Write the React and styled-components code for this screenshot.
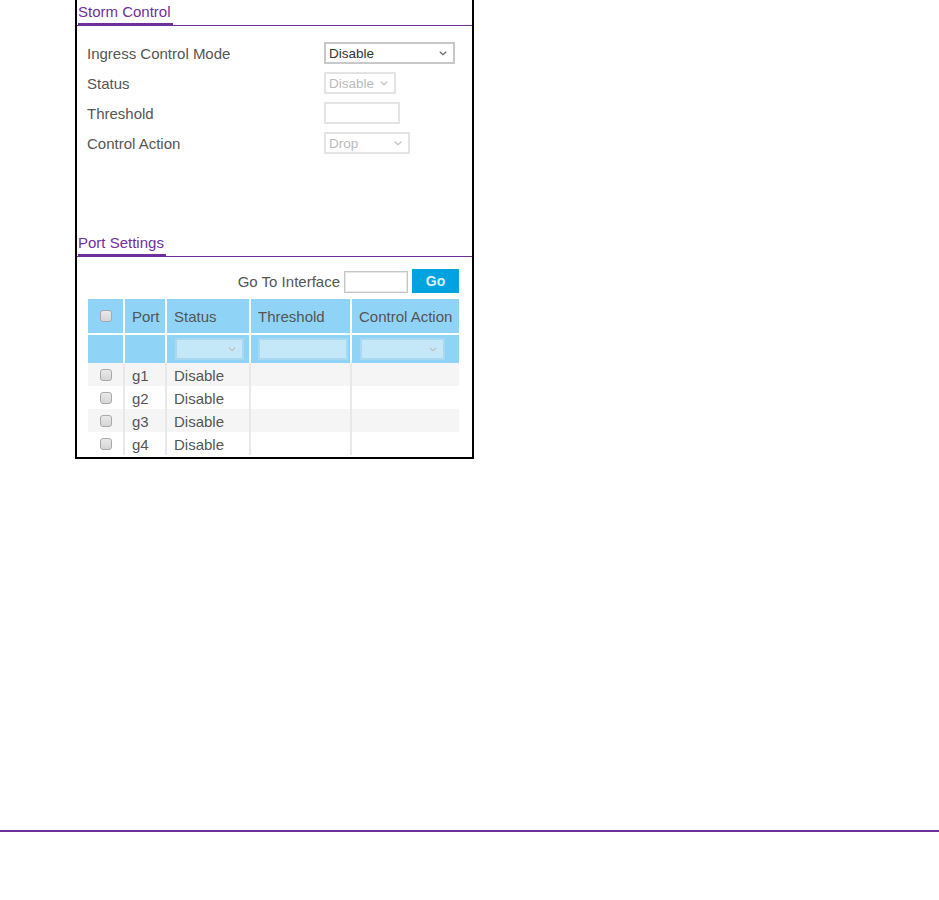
import React from 'react';
import styled, { createGlobalStyle } from 'styled-components';

const GlobalStyle = createGlobalStyle`
    html, body {
        margin: 0;
        padding: 0;
        background: #fff;
    }
    body {
        font-family: "Liberation Sans", Arial, sans-serif;
        font-size: 15px;
        color: #555;
    }
`

const PURPLE = '#6f2f9f';

const ports = ['g1', 'g2', 'g3', 'g4'];

const Chevron = ({ disabled }) => (
    <StyledChevron width="8" height="5" viewBox="0 0 8 5">
        <path d="M0.8 0.8 L4 3.8 L7.2 0.8" fill="none" stroke={disabled ? '#c0c0c0' : '#666'} strokeWidth="1.2" />
    </StyledChevron>
);

const Select = ({ value, width, disabled, filter }) => (
    <StyledSelectBox width={width} disabled={disabled} filter={filter}>
        <span>{value}</span>
        <Chevron disabled={disabled || filter} />
    </StyledSelectBox>
);

class App extends React.Component {
    render() {
        return (
            <StyledPage>
                <GlobalStyle />
                <StyledFrame>
                    <StyledSectionHeader>
                        <StyledSectionTitle>Storm Control</StyledSectionTitle>
                    </StyledSectionHeader>

                    <StyledForm>
                        <StyledLabel>Ingress Control Mode</StyledLabel>
                        <Select value="Disable" width={131} />
                        <StyledLabel>Status</StyledLabel>
                        <Select value="Disable" width={72} disabled />
                        <StyledLabel>Threshold</StyledLabel>
                        <StyledTextInput width={76} />
                        <StyledLabel>Control Action</StyledLabel>
                        <Select value="Drop" width={86} disabled />
                    </StyledForm>

                    <StyledSectionHeader spaced>
                        <StyledSectionTitle>Port Settings</StyledSectionTitle>
                    </StyledSectionHeader>

                    <StyledGoRow>
                        <span>Go To Interface</span>
                        <StyledGoInput />
                        <StyledGoButton>Go</StyledGoButton>
                    </StyledGoRow>

                    <StyledTable>
                        <colgroup>
                            <col style={{ width: 37 }} />
                            <col style={{ width: 42 }} />
                            <col style={{ width: 84 }} />
                            <col style={{ width: 101 }} />
                            <col style={{ width: 107 }} />
                        </colgroup>
                        <thead>
                            <tr>
                                <StyledHeadCell center><StyledCheckbox /></StyledHeadCell>
                                <StyledHeadCell>Port</StyledHeadCell>
                                <StyledHeadCell>Status</StyledHeadCell>
                                <StyledHeadCell>Threshold</StyledHeadCell>
                                <StyledHeadCell last>Control Action</StyledHeadCell>
                            </tr>
                            <tr>
                                <StyledFilterCell />
                                <StyledFilterCell />
                                <StyledFilterCell><Select value="" width={69} filter /></StyledFilterCell>
                                <StyledFilterCell><StyledFilterInput /></StyledFilterCell>
                                <StyledFilterCell last><Select value="" width={85} filter /></StyledFilterCell>
                            </tr>
                        </thead>
                        <tbody>
                            {ports.map((p, i) => (
                                <StyledRow key={p} odd={i % 2 === 0}>
                                    <StyledCell center><StyledCheckbox /></StyledCell>
                                    <StyledCell>{p}</StyledCell>
                                    <StyledCell>Disable</StyledCell>
                                    <StyledCell></StyledCell>
                                    <StyledCell last></StyledCell>
                                </StyledRow>
                            ))}
                        </tbody>
                    </StyledTable>
                </StyledFrame>
                <StyledFooterRule />
            </StyledPage>
        );
    }
}

const StyledPage = styled.div`
    width: 939px;
    height: 900px;
    overflow: hidden;
`

const StyledFrame = styled.div`
    box-sizing: border-box;
    width: 399px;
    margin-left: 75px;
    border: 2px solid #000;
    border-top: none;
    padding-bottom: 2px;
`

const StyledSectionHeader = styled.div`
    display: flex;
    border-bottom: 1px solid ${PURPLE};
    margin-top: ${p => (p.spaced ? '73px' : '0')};
`

const StyledSectionTitle = styled.span`
    display: block;
    margin-left: 1px;
    padding: 2px 2px 1px 0;
    line-height: 20px;
    font-size: 15px;
    color: ${PURPLE};
    border-bottom: 3px solid ${PURPLE};
    margin-bottom: -1px;
`

const StyledForm = styled.div`
    display: grid;
    grid-template-columns: 237px auto;
    grid-auto-rows: 30px;
    align-items: center;
    justify-items: start;
    padding: 12px 0 0 10px;
`

const StyledLabel = styled.div`
    color: #555;
    font-size: 15px;
`

const StyledSelectBox = styled.div`
    position: relative;
    box-sizing: border-box;
    width: ${p => p.width}px;
    height: 22px;
    display: flex;
    align-items: center;
    padding-left: 3px;
    font-size: 13.5px;
    color: ${p => (p.disabled ? '#bbb' : '#333')};
    background: ${p => (p.filter ? '#c5e8f9' : '#fff')};
    border: ${p => (p.filter ? '2px solid #a9d9f0' : p.disabled ? '2px solid #e4e4e4' : '2px solid #c8c8c8')};
    ${p => (p.filter ? 'margin-left: 1px;' : '')}
`

const StyledChevron = styled.svg`
    position: absolute;
    right: 6px;
    top: 50%;
    margin-top: -2px;
`

const StyledTextInput = styled.div`
    box-sizing: border-box;
    width: ${p => p.width}px;
    height: 22px;
    border: 2px solid #e4e4e4;
    background: #fff;
`

const StyledGoRow = styled.div`
    display: flex;
    justify-content: flex-end;
    align-items: center;
    gap: 4px;
    padding: 12px 13px 0 0;
    font-size: 15px;
    color: #555;
`

const StyledGoInput = styled.div`
    box-sizing: border-box;
    width: 64px;
    height: 22px;
    border: 1px solid #c6c6c6;
    box-shadow: inset 0 0 0 1px #e8e8e8;
    margin-top: 2px;
`

const StyledGoButton = styled.button`
    box-sizing: border-box;
    width: 47px;
    height: 24px;
    border: none;
    background: #00a3e0;
    color: #dff2fb;
    font-family: "Liberation Sans", Arial, sans-serif;
    font-size: 14px;
    font-weight: bold;
    padding: 0;
`

const StyledTable = styled.table`
    table-layout: fixed;
    width: 371px;
    margin: 6px 0 0 11px;
    border-collapse: separate;
    border-spacing: 0;
    font-size: 15px;
    color: #555;
`

const StyledHeadCell = styled.th`
    height: 34px;
    padding: 0 0 0 ${p => (p.center ? '0' : '7px')};
    text-align: ${p => (p.center ? 'center' : 'left')};
    font-weight: normal;
    background: #8fd4f6;
    border-right: ${p => (p.last ? 'none' : '2px solid #fff')};
    border-bottom: 2px solid #fff;
    vertical-align: middle;
    white-space: nowrap;
    overflow: hidden;
`

const StyledFilterCell = styled.td`
    height: 28px;
    padding: 0 0 0 7px;
    background: #8fd4f6;
    border-right: ${p => (p.last ? 'none' : '2px solid #fff')};
    vertical-align: middle;
`

const StyledFilterInput = styled.div`
    box-sizing: border-box;
    width: 90px;
    height: 22px;
    background: #c5e8f9;
    border: 2px solid #a9d9f0;
`

const StyledRow = styled.tr`
    background: ${p => (p.odd ? '#f5f5f5' : '#fff')};
`

const StyledCell = styled.td`
    height: 23px;
    padding: 2px 0 0 ${p => (p.center ? '0' : '7px')};
    text-align: ${p => (p.center ? 'center' : 'left')};
    border-right: ${p => (p.last ? 'none' : '2px solid #e8e8e8')};
    vertical-align: middle;
    line-height: 21px;
    box-sizing: border-box;
`

const StyledCheckbox = styled.span`
    display: inline-block;
    box-sizing: border-box;
    width: 12px;
    height: 12px;
    border: 1px solid #a9a9a9;
    border-radius: 3px;
    background: linear-gradient(#e9e9e9, #d6d6d6);
    vertical-align: middle;
    margin-top: -4px;
`

const StyledFooterRule = styled.div`
    margin-top: 371px;
    height: 2px;
    background: ${PURPLE};
`

export default App;
